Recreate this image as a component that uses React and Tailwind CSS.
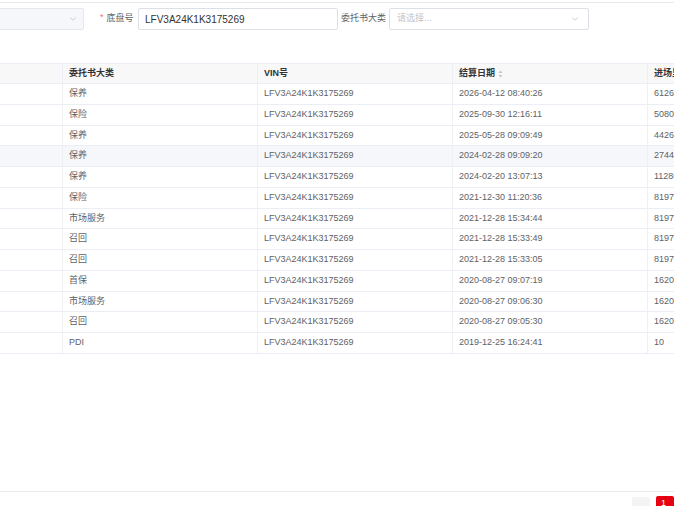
import { ChevronDown } from 'lucide-react'

const rows = [
  ['保养', '2026-04-12 08:40:26', '61263'],
  ['保险', '2025-09-30 12:16:11', '50802'],
  ['保养', '2025-05-28 09:09:49', '44265'],
  ['保养', '2024-02-28 09:09:20', '27441'],
  ['保养', '2024-02-20 13:07:13', '11280'],
  ['保险', '2021-12-30 11:20:36', '81970'],
  ['市场服务', '2021-12-28 15:34:44', '81970'],
  ['召回', '2021-12-28 15:33:49', '81970'],
  ['召回', '2021-12-28 15:33:05', '81970'],
  ['首保', '2020-08-27 09:07:19', '16200'],
  ['市场服务', '2020-08-27 09:06:30', '16200'],
  ['召回', '2020-08-27 09:05:30', '16200'],
  ['PDI', '2019-12-25 16:24:41', '10'],
]

const VIN = 'LFV3A24K1K3175269'
const font = { fontFamily: '"Liberation Sans", "Noto Sans CJK SC", sans-serif' }

function SortIcon() {
  return (
    <svg width="5" height="8" viewBox="0 0 5 8" className="ml-[3px]">
      <path d="M2.5 0.5 L4.5 3 L0.5 3 Z" fill="#c0c4cc" />
      <path d="M2.5 7.5 L4.5 5 L0.5 5 Z" fill="#c0c4cc" />
    </svg>
  )
}

export default function App() {
  return (
    <div className="w-[674px] h-[506px] overflow-hidden bg-white relative flex flex-col" style={font}>
      <div className="h-[3px] border-b border-[#ebebeb]" />

      {/* search form */}
      <div className="flex items-center h-[22px] mt-[5px] text-[9px] text-[#606266]">
        <div className="w-[85px] ml-[-1px] h-[22px] rounded-[2px] border border-[#e4e7ed] bg-[#f5f7fa] flex items-center justify-end pr-[5px]">
          <ChevronDown size={10} color="#c0c4cc" />
        </div>
        <div className="ml-[16px] w-[38px] flex items-center">
          <span className="text-[#f56c6c] mr-[3px] mt-[-2px]">*</span>
          <span>底盘号</span>
        </div>
        <div className="w-[200px] h-[22px] border border-[#dcdfe6] rounded-[2px] flex items-center pl-[6px] text-[10px] text-[#333]">
          {VIN}
        </div>
        <div className="ml-[3px] w-[48px]">委托书大类</div>
        <div className="w-[200px] h-[22px] border border-[#dcdfe6] rounded-[2px] flex items-center justify-between pl-[7px] pr-[8px] text-[#c0c4cc]">
          <span>请选择...</span>
          <ChevronDown size={10} color="#c0c4cc" />
        </div>
      </div>

      {/* table */}
      <div className="mt-[33px] w-[760px] text-[9px]">
        <div className="flex h-[21px] bg-[#f8f8f9] border-t border-b border-[#ebeef5] font-bold text-[#333] items-center">
          <div className="w-[63px] h-full border-r border-[#ebeef5]" />
          <div className="w-[195px] h-full px-[6px] flex items-center border-r border-[#ebeef5]">委托书大类</div>
          <div className="w-[195px] h-full px-[6px] flex items-center border-r border-[#ebeef5]">VIN号</div>
          <div className="w-[195px] h-full px-[6px] flex items-center border-r border-[#ebeef5]">
            结算日期
            <SortIcon />
          </div>
          <div className="w-[110px] h-full px-[6px] flex items-center">进场里程</div>
        </div>
        {rows.map((r, i) => (
          <div
            key={i}
            className={`flex h-[20.75px] items-center border-b border-[#ebeef5] text-[#606266] ${i === 3 ? 'bg-[#f5f7fa]' : 'bg-white'}`}
          >
            <div className="w-[63px] h-full border-r border-[#f0f0f0]" />
            <div className="w-[195px] h-full px-[6px] flex items-center border-r border-[#f0f0f0]">{r[0]}</div>
            <div className="w-[195px] h-full px-[6px] flex items-center border-r border-[#f0f0f0]">{VIN}</div>
            <div className="w-[195px] h-full px-[6px] flex items-center border-r border-[#f0f0f0]">{r[1]}</div>
            <div className="w-[110px] h-full px-[6px] flex items-center">{r[2]}</div>
          </div>
        ))}
      </div>

      {/* footer / pagination */}
      <div className="mt-auto h-[15px] border-t border-[#ebebeb] flex justify-end items-end gap-[6px]">
        <div className="w-[18px] h-[9px] bg-[#f4f4f5] rounded-t-[2px]" />
        <div className="w-[18px] h-[10px] bg-[#e60012] rounded-t-[2px] text-white text-[9px] leading-[14px] pl-[5px]">1</div>
      </div>
    </div>
  )
}
